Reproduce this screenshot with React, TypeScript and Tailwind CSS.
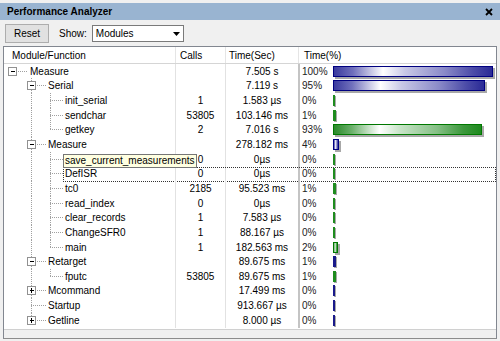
import React from "react";

type Row = {
  level: number;
  label: string;
  box?: "minus" | "plus";
  last?: boolean;
  calls: string;
  time: string;
  pct: number;
  kind: "mod" | "fn";
  tip?: boolean;
  focus?: boolean;
};

// cont = which vertical guide lines (by level) keep running past a row
const rows: (Row & { cont: number[] })[] = [
  { level: 0, label: "Measure", box: "minus", last: true, calls: "", time: "7.505 s", pct: 100, kind: "mod", cont: [] },
  { level: 1, label: "Serial", box: "minus", calls: "", time: "7.119 s", pct: 95, kind: "mod", cont: [] },
  { level: 2, label: "init_serial", calls: "1", time: "1.583 µs", pct: 0, kind: "fn", cont: [1] },
  { level: 2, label: "sendchar", calls: "53805", time: "103.146 ms", pct: 1, kind: "fn", cont: [1] },
  { level: 2, label: "getkey", last: true, calls: "2", time: "7.016 s", pct: 93, kind: "fn", cont: [1] },
  { level: 1, label: "Measure", box: "minus", calls: "", time: "278.182 ms", pct: 4, kind: "mod", cont: [] },
  { level: 2, label: "save_current_measurements", calls: "0", time: "0µs", pct: 0, kind: "fn", cont: [1], tip: true },
  { level: 2, label: "DefISR", calls: "0", time: "0µs", pct: 0, kind: "fn", cont: [1], focus: true },
  { level: 2, label: "tc0", calls: "2185", time: "95.523 ms", pct: 1, kind: "fn", cont: [1] },
  { level: 2, label: "read_index", calls: "0", time: "0µs", pct: 0, kind: "fn", cont: [1] },
  { level: 2, label: "clear_records", calls: "1", time: "7.583 µs", pct: 0, kind: "fn", cont: [1] },
  { level: 2, label: "ChangeSFR0", calls: "1", time: "88.167 µs", pct: 0, kind: "fn", cont: [1] },
  { level: 2, label: "main", last: true, calls: "1", time: "182.563 ms", pct: 2, kind: "fn", cont: [1] },
  { level: 1, label: "Retarget", box: "minus", calls: "", time: "89.675 ms", pct: 1, kind: "mod", cont: [] },
  { level: 2, label: "fputc", last: true, calls: "53805", time: "89.675 ms", pct: 1, kind: "fn", cont: [1] },
  { level: 1, label: "Mcommand", box: "plus", calls: "", time: "17.499 ms", pct: 0, kind: "mod", cont: [] },
  { level: 1, label: "Startup", calls: "", time: "913.667 µs", pct: 0, kind: "mod", cont: [] },
  { level: 1, label: "Getline", box: "plus", last: true, calls: "", time: "8.000 µs", pct: 0, kind: "mod", cont: [] },
];

const centers = [8, 27, 46];
const textX = [26, 44, 61];

function TreeGuides({ row }: { row: Row & { cont: number[] } }) {
  const c = centers[row.level];
  const w = textX[row.level];
  const dot = { stroke: "#a0a0a0", strokeDasharray: "1 1", shapeRendering: "crispEdges" as const };
  return (
    <svg width={w} height={15} className="shrink-0 overflow-visible">
      {row.cont.map((k) => (
        <line key={k} x1={centers[k] + 0.5} y1={0} x2={centers[k] + 0.5} y2={15} {...dot} />
      ))}
      {row.level > 0 && (
        <line x1={c + 0.5} y1={0} x2={c + 0.5} y2={row.last ? 7.5 : 15} {...dot} />
      )}
      <line x1={c} y1={7.5} x2={w - 2} y2={7.5} {...dot} />
      {row.box && (
        <g shapeRendering="crispEdges">
          <rect x={c - 3.5} y={3.5} width={8} height={8} fill="#fff" stroke="#919191" />
          <line x1={c - 1} y1={7.5} x2={c + 3} y2={7.5} stroke="#000" />
          {row.box === "plus" && <line x1={c + 0.5} y1={5} x2={c + 0.5} y2={10} stroke="#000" />}
        </g>
      )}
    </svg>
  );
}

function Bar({ pct, kind }: { pct: number; kind: "mod" | "fn" }) {
  const w = pct >= 100 ? 160 : pct >= 95 ? 152 : pct >= 93 ? 149 : pct >= 4 ? 6 : pct >= 2 ? 5 : pct >= 1 ? 3 : 2;
  const blue = kind === "mod";
  if (w <= 3) {
    return (
      <div
        className={`h-[11px] shadow-[1px_1px_0_#a8a8a8] ${blue ? "bg-[#1a1a8a]" : "bg-[#1e8c1e]"}`}
        style={{ width: w }}
      />
    );
  }
  return (
    <div
      className={`h-[11px] border shadow-[2px_2px_0_#a8a8a8] ${
        blue
          ? "border-[#000080] bg-[linear-gradient(90deg,#3a3a9e_0%,#7070bc_12%,#ffffff_31%,#c8c8e6_45%,#8a8ac8_70%,#4c4ca8_88%,#2a2a96_100%)]"
          : "border-[#007800] bg-[linear-gradient(90deg,#2a8a2a_0%,#6ab06a_12%,#ffffff_31%,#c8e4c8_45%,#86c086_70%,#3c983c_88%,#1e8a1e_100%)]"
      }`}
      style={{ width: w }}
    />
  );
}

export default function App() {
  return (
    <div className="w-[500px] h-[341px] bg-[#f0f0f0] pt-[3px] flex flex-col overflow-hidden font-['Liberation_Sans',Arial,sans-serif] text-[10px] text-black">
      {/* Title bar */}
      <div className="h-[17px] bg-[#99b4d1] flex items-center justify-between pl-[7px] pr-[7px]">
        <span className="font-bold">Performance Analyzer</span>
        <svg width="8" height="8" viewBox="0 0 8 8">
          <path d="M1 1 L7 7 M7 1 L1 7" stroke="#000" strokeWidth="1.8" />
        </svg>
      </div>

      {/* Toolbar */}
      <div className="h-[26px] flex items-center pl-[5px] pt-[1px]">
        <button className="w-[44px] h-[19px] bg-[#e1e1e1] border border-[#adadad] flex items-center justify-center">
          Reset
        </button>
        <span className="ml-[10px]">Show:</span>
        <div className="ml-[5px] w-[92px] h-[17px] bg-white border border-[#7a7a7a] flex items-center justify-between pl-[3px] pr-[3px]">
          <span>Modules</span>
          <svg width="7" height="4" viewBox="0 0 7 4">
            <path d="M0 0 H7 L3.5 4 Z" fill="#000" />
          </svg>
        </div>
      </div>

      {/* List */}
      <div className="mx-[3px] w-[494px] h-[293px] border border-[#828790] border-b-[#8c8c8c] flex flex-col bg-white">
        <div className="h-[17px] flex border-b border-[#d5d5d5] shrink-0">
          <div className="w-[172px] border-r border-[#e5e5e5] pl-[8px] flex items-center">Module/Function</div>
          <div className="w-[50px] border-r border-[#e5e5e5] pl-[4px] flex items-center">Calls</div>
          <div className="w-[73px] border-r border-[#e5e5e5] pl-[3px] flex items-center">Time(Sec)</div>
          <div className="flex-1 pl-[5px] flex items-center">Time(%)</div>
        </div>

        {rows.map((r, i) => (
          <div key={i} className="relative h-[14.65px] flex shrink-0">
            <div className="w-[172px] border-r border-[#e2e2e2] flex items-center">
              <TreeGuides row={r} />
              {/* the tooltip carries the label of the hovered row */}
              {!r.tip && <span className="whitespace-nowrap">{r.label}</span>}
            </div>
            <div className="w-[50px] border-r border-[#e2e2e2] flex items-center justify-center">{r.calls}</div>
            <div className="w-[74px] border-r-2 border-[#c4c4c4] flex items-center justify-center">{r.time}</div>
            <div className="flex-1 flex items-center pl-[2px]">
              <span className="w-[31px] text-[#222]">{r.pct}%</span>
              <Bar pct={r.pct} kind={r.kind} />
            </div>
            {r.tip && (
              <div className="absolute left-[59px] top-[2px] h-[14px] z-10 bg-[#ffffe1] border border-[#767676] px-[1px] flex items-center whitespace-nowrap">
                {r.label}
              </div>
            )}
            {r.focus && (
              <div className="absolute left-[59px] right-0 top-[1px] bottom-[-1px] border border-dotted border-[#333]" />
            )}
          </div>
        ))}

        <div className="flex-1 mt-[1px] border-t border-[#d0d0d0] bg-[#f0f0f0]" />
      </div>
    </div>
  );
}
